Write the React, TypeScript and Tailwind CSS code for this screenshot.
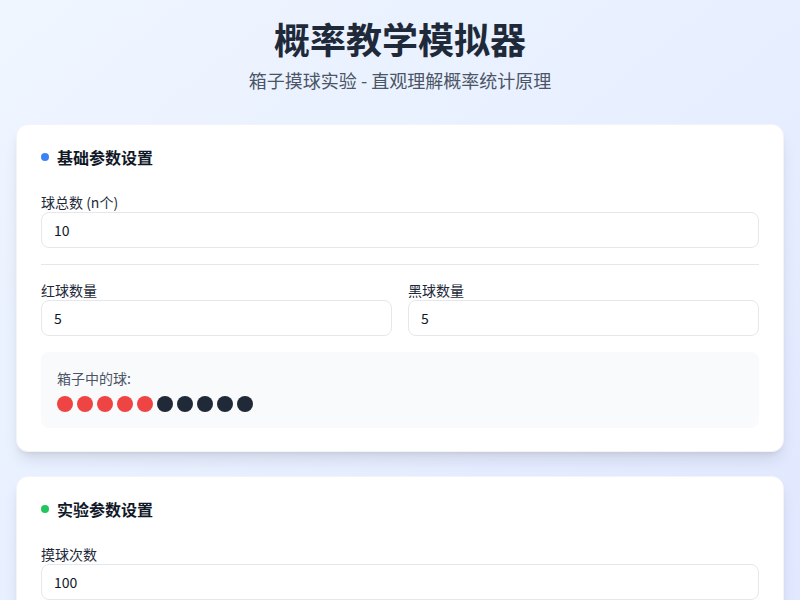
import { useState } from "react";

function Field({
  label,
  value,
  onChange,
}: {
  label: string;
  value: number;
  onChange: (v: number) => void;
}) {
  return (
    <div>
      <label className="block text-sm leading-[19px] text-gray-800">{label}</label>
      <input
        type="number"
        value={value}
        onChange={(e) => onChange(Number(e.target.value))}
        className="block h-9 w-full rounded-lg border border-gray-200 bg-white px-3 text-sm text-gray-900 outline-none [appearance:textfield] [&::-webkit-inner-spin-button]:appearance-none"
      />
    </div>
  );
}

function SectionTitle({ color, children }: { color: string; children: string }) {
  return (
    <h2 className="mb-[26px] flex items-center gap-2 text-base leading-5 font-bold text-gray-900">
      <span className={`h-2 w-2 rounded-full ${color}`} />
      {children}
    </h2>
  );
}

export default function App() {
  const [total, setTotal] = useState(10);
  const [red, setRed] = useState(5);
  const [black, setBlack] = useState(5);
  const [draws, setDraws] = useState(100);

  const balls = [
    ...Array.from({ length: red }, () => "red"),
    ...Array.from({ length: black }, () => "black"),
  ];

  return (
    <div
      className="min-h-screen bg-gradient-to-br from-[#eff6ff] to-[#e0e7ff] px-4 pt-[18px] pb-8"
      style={{ fontFamily: '"Noto Sans CJK SC", "Noto Sans", sans-serif' }}
    >
      <header className="mb-[30px] text-center">
        <h1 className="text-4xl leading-10 font-bold text-gray-800">概率教学模拟器</h1>
        <p className="mt-2 text-lg leading-7 text-gray-600">箱子摸球实验 - 直观理解概率统计原理</p>
      </header>

      <div className="space-y-6">
        <section className="rounded-xl border border-gray-100 bg-white px-6 pt-[22px] pb-[23px] shadow-lg">
          <SectionTitle color="bg-[#3b82f6]">基础参数设置</SectionTitle>
          <Field label="球总数 (n个)" value={total} onChange={setTotal} />
          <div className="my-4 border-t border-gray-200" />
          <div className="grid grid-cols-2 gap-4">
            <Field label="红球数量" value={red} onChange={setRed} />
            <Field label="黑球数量" value={black} onChange={setBlack} />
          </div>
          <div className="mt-4 rounded-lg bg-gray-50 p-4">
            <p className="mb-2 text-sm leading-5 text-gray-600">箱子中的球:</p>
            <div className="flex gap-1">
              {balls.map((b, i) => (
                <span
                  key={i}
                  className={`h-4 w-4 rounded-full ${b === "red" ? "bg-[#ef4444]" : "bg-[#1f2937]"}`}
                />
              ))}
            </div>
          </div>
        </section>

        <section className="rounded-xl border border-gray-100 bg-white px-6 pt-[22px] pb-6 shadow-lg">
          <SectionTitle color="bg-[#22c55e]">实验参数设置</SectionTitle>
          <Field label="摸球次数" value={draws} onChange={setDraws} />
        </section>
      </div>
    </div>
  );
}
